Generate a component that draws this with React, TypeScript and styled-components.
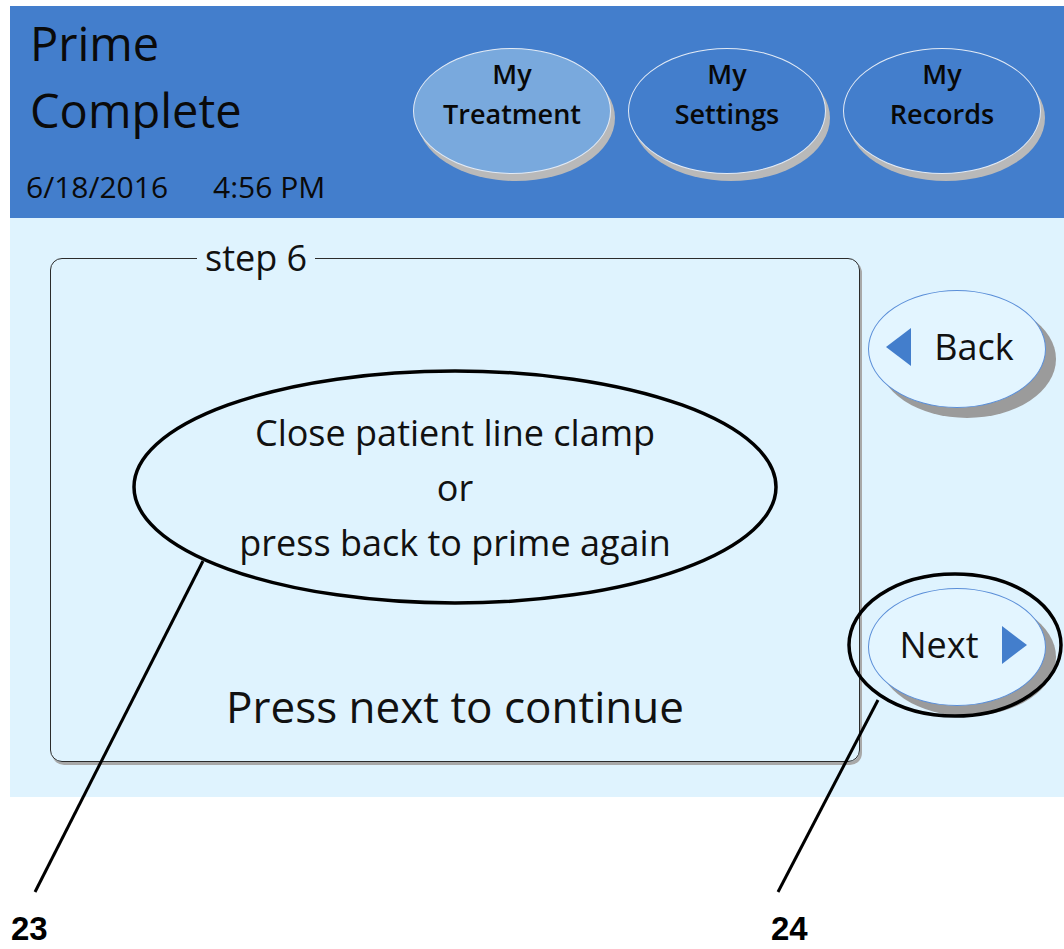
import React from "react";
import styled, { createGlobalStyle } from "styled-components";

const FONT = `"Open Sans", "Noto Sans", "DejaVu Sans", sans-serif`;
const HEADER_BLUE = "#437ecc";

const GlobalStyle = createGlobalStyle`
  html, body { margin: 0; padding: 0; background: #ffffff; }
  body { font-family: ${FONT}; color: #111111; }
  button { font: inherit; }
  * { box-sizing: border-box; }
`;

const Page = styled.div`
  position: relative;
  width: 1064px;
  height: 949px;
  overflow: hidden;
  padding-top: 6px;
`;

const Screen = styled.div`
  margin-left: 10px;
  width: 1054px;
  display: flex;
  flex-direction: column;
`;

const Header = styled.header`
  height: 212px;
  background: ${HEADER_BLUE};
  display: flex;
  align-items: flex-start;
  padding: 4px 23px 0 20px;
`;

const TitleBlock = styled.div`
  display: flex;
  flex-direction: column;
`;

const Title = styled.h1`
  margin: 0;
  font-family: ${FONT};
  font-size: 47px;
  font-weight: 400;
  line-height: 67px;
  color: #0a0a0a;
`;

const DateLine = styled.div`
  margin: 25px 0 0 -4px;
  display: flex;
  gap: 45px;
  font-size: 30px;
  line-height: 36px;
  color: #0a0a0a;
`;

const Nav = styled.nav`
  margin-left: auto;
  margin-top: 38px;
  display: flex;
  gap: 17px;
`;

const NavButton = styled.button<{ $active?: boolean }>`
  width: 198px;
  height: 126px;
  border-radius: 50%;
  border: 1.5px solid #e2eaf5;
  background: ${(p) => (p.$active ? "#79a9dd" : HEADER_BLUE)};
  box-shadow: 4px 7px 0 #b9b9b9;
  display: flex;
  flex-direction: column;
  align-items: center;
  justify-content: flex-start;
  padding: 5px 0 0;
  font-size: 27px;
  font-weight: 600;
  line-height: 40px;
  color: #080808;
  cursor: pointer;
`;

const Content = styled.main`
  height: 579px;
  background: #dff3fe;
  display: flex;
  align-items: flex-start;
  padding: 18px 0 0 40px;
  gap: 8px;
`;

const StepBox = styled.fieldset`
  margin: 0;
  width: 810px;
  height: 526px;
  border: 1.5px solid #2b2b2b;
  border-radius: 12px;
  box-shadow: 2px 3px 0 #a8a8a8;
  padding: 0;
  display: flex;
  flex-direction: column;
  align-items: center;
`;

const Legend = styled.legend`
  margin-left: 146px;
  padding: 0 8px;
  font-size: 36px;
  line-height: 44px;
  color: #111;
`;

const Message = styled.p`
  margin: 125px 0 0;
  text-align: center;
  font-size: 36px;
  line-height: 55px;
  color: #111;
`;

const Continue = styled.p`
  margin: 106px 0 0;
  text-align: center;
  font-size: 44px;
  line-height: 60px;
  color: #111;
`;

const Side = styled.div`
  display: flex;
  flex-direction: column;
  padding-top: 54px;
  gap: 180px;
`;

const RoundButton = styled.button<{ $dir: "left" | "right" }>`
  width: 178px;
  height: 118px;
  border-radius: 50%;
  border: 1.5px solid #5a8ed8;
  background: #e3f5ff;
  box-shadow: 10px 10px 0 #9b9b9b;
  display: flex;
  align-items: center;
  justify-content: center;
  gap: 23px;
  padding: ${(p) => (p.$dir === "left" ? "0 14px 4px 0" : "0 0 4px 12px")};
  font-size: 36px;
  line-height: 44px;
  color: #111;
  cursor: pointer;
`;

const Arrow = styled.svg`
  width: 25px;
  height: 38px;
  flex: none;
  display: block;
`;

const Footer = styled.footer`
  display: grid;
  grid-template-columns: 760px auto;
  padding-left: 11px;
  margin-top: 112px;
`;

const Label = styled.span`
  font-family: "Liberation Sans", Arial, sans-serif;
  font-weight: 700;
  font-size: 33px;
  line-height: 40px;
  color: #000;
`;

const Overlay = styled.svg`
  position: absolute;
  left: 0;
  top: 0;
  width: 1064px;
  height: 949px;
  pointer-events: none;
`;

const ArrowIcon = ({ dir }: { dir: "left" | "right" }) => (
  <Arrow viewBox="0 0 25 38">
    {dir === "left" ? (
      <polygon points="25,0 25,38 0,19" fill={HEADER_BLUE} />
    ) : (
      <polygon points="0,0 0,38 25,19" fill={HEADER_BLUE} />
    )}
  </Arrow>
);

export default function App() {
  return (
    <>
      <GlobalStyle />
      <Page>
        <Screen>
          <Header>
            <TitleBlock>
              <Title>
                Prime
                <br />
                Complete
              </Title>
              <DateLine>
                <span>6/18/2016</span>
                <span>4:56 PM</span>
              </DateLine>
            </TitleBlock>
            <Nav>
              <NavButton $active>
                <span>My</span>
                <span>Treatment</span>
              </NavButton>
              <NavButton>
                <span>My</span>
                <span>Settings</span>
              </NavButton>
              <NavButton>
                <span>My</span>
                <span>Records</span>
              </NavButton>
            </Nav>
          </Header>
          <Content>
            <StepBox>
              <Legend>step 6</Legend>
              <Message>
                Close patient line clamp
                <br />
                or
                <br />
                press back to prime again
              </Message>
              <Continue>Press next to continue</Continue>
            </StepBox>
            <Side>
              <RoundButton $dir="left">
                <ArrowIcon dir="left" />
                <span>Back</span>
              </RoundButton>
              <RoundButton $dir="right">
                <span>Next</span>
                <ArrowIcon dir="right" />
              </RoundButton>
            </Side>
          </Content>
        </Screen>
        <Footer>
          <Label>23</Label>
          <Label>24</Label>
        </Footer>
        <Overlay viewBox="0 0 1064 949">
          <ellipse cx="455" cy="487" rx="321" ry="116" fill="none" stroke="#000" strokeWidth="3.5" />
          <ellipse cx="955" cy="645" rx="106" ry="71" fill="none" stroke="#000" strokeWidth="3.5" />
          <line x1="203" y1="561" x2="35" y2="892" stroke="#000" strokeWidth="3" />
          <line x1="878" y1="700" x2="778" y2="892" stroke="#000" strokeWidth="3" />
        </Overlay>
      </Page>
    </>
  );
}
